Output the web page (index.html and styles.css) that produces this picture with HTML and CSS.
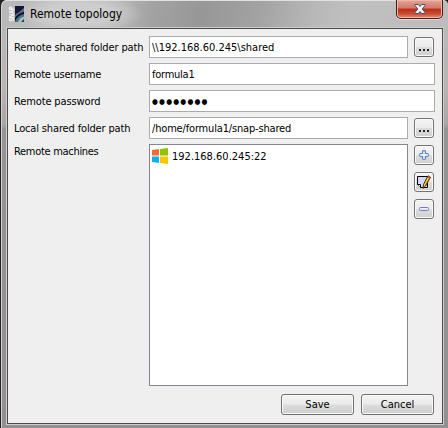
FILE: index.html
```html
<!DOCTYPE html>
<html lang="en">
<head>
<meta charset="utf-8">
<title>Remote topology</title>
<link rel="stylesheet" href="styles.css">
</head>
<body>
<div class="window">
  <header class="titlebar">
    <svg class="app-icon" width="16" height="16" viewBox="0 0 16 16">
      <text class="app-name" transform="translate(5.800 15.500) rotate(-90)" textLength="15" lengthAdjust="spacingAndGlyphs">SNAP</text>
      <rect x="7" width="9" height="16" fill="#121638"/>
      <path d="M7 9C9 7 13 5 16 2V6C12 7 9 9 7 12Z" fill="#686b88"/>
      <path d="M7 12C9 9 12 7 16 6V9C12 9 9 12 7 15Z" fill="#0c0f22"/>
      <path d="M7 16C8 12 11 9 16 8V11L11 16Z" fill="#447184"/>
      <path d="M10 16C11 13 13 11 16 10.500V16Z" fill="#9bc3bd"/>
      <path d="M13 16 16 13V16Z" fill="#31403c"/>
    </svg>
    <h1 class="title">Remote topology</h1>
    <button class="close" aria-label="Close">
      <svg width="12" height="10" viewBox="0 0 12 10"><path d="M1 .5H4.400L6 2.500 7.600 .5H11V1.500L8.200 5 11 8.500V9.500H7.600L6 7.500 4.400 9.500H1V8.500L3.800 5 1 1.500Z" fill="#f4f4f6" stroke="#4b4b60"/></svg>
    </button>
  </header>
  <main class="panel">
    <div class="row"><label class="l1">Remote shared folder path</label><div class="field">\\192.168.60.245\shared</div><button class="tool"><i class="dots"></i></button></div>
    <div class="row"><label class="l2">Remote username</label><div class="field v2">formula1</div></div>
    <div class="row"><label class="l3">Remote password</label><div class="field password">●●●●●●●●</div></div>
    <div class="row"><label class="l4">Local shared folder path</label><div class="field v4">/home/formula1/snap-shared</div><button class="tool"><i class="dots"></i></button></div>
    <div class="row machines">
      <label class="l5">Remote machines</label>
      <div class="list">
        <div class="machine">
          <svg width="16" height="16" viewBox="0 0 16 16"><path d="M0 2 7 1V7.500H0Z" fill="#fb6a32"/><path d="M8 .9 16 0V7.500H8Z" fill="#90c300"/><path d="M0 8.500H7V15L0 14Z" fill="#08b4f0"/><path d="M8 8.500H16V16L8 15Z" fill="#ffc400"/></svg>
          <span>192.168.60.245:22</span>
        </div>
      </div>
      <div class="tools">
        <button class="tool" aria-label="Add"><svg width="10" height="10" viewBox="0 0 10 10"><path d="M3.500 1.500Q3.500 .6 5 .6T6.500 1.500V3.500H8.500Q9.400 3.500 9.400 5T8.500 6.500H6.500V8.500Q6.500 9.400 5 9.400T3.500 8.500V6.500H1.500Q.6 6.500 .6 5T1.500 3.500H3.500Z" fill="#e4edf7" stroke="#5c86b7" stroke-width="1.100"/></svg></button>
        <button class="tool" aria-label="Edit"><svg width="14" height="14" viewBox="0 0 14 14"><path d="M.5 1.500H10.500V12.500H3.500L.5 9.500Z" fill="#d3d7fb" stroke="#000"/><path d="M.5 9.500H3.500V12.500" fill="#fff" stroke="#000"/><path d="M11 .8 13.500 2.300 8.500 11 6 13.300 6.500 9.500Z" fill="#f0d51b" stroke="#000" stroke-width=".8"/><path d="M12.500 3.500 8.200 10.800" stroke="#a64024" stroke-width=".9"/><path d="M11 1.600 13 2.800" stroke="#dc4745" stroke-width="1.600"/></svg></button>
        <button class="tool" aria-label="Remove"><svg width="10" height="4" viewBox="0 0 10 4"><rect x=".5" y=".5" width="9" height="3" rx="1" fill="#e8e9fa" stroke="#7778c3"/></svg></button>
      </div>
    </div>
    <footer class="actions"><button class="action">Save</button><button class="action">Cancel</button></footer>
  </main>
</div>
</body>
</html>
```
FILE: styles.css
```css
* { box-sizing: border-box; }
body { margin: 0; background: #222; overflow: hidden; font: 11px/20px "DejaVu Sans Condensed", "DejaVu Sans", sans-serif; font-stretch: condensed; color: #000; }
button { padding: 0; font: inherit; color: inherit; }
svg { display: block; flex: none; }
.window { width: 447px; height: 428px; margin-left: 1px; padding: 1px 4px 4px 5px; border-radius: 6px 6px 0 0; border-left: 1px solid #d5d3d3; background: linear-gradient(180deg, #b8b8b8 0, #b9b5b5 85px, #aaa6a6 124px, #959494 129px, #929090 100%); }
.titlebar { display: flex; height: 28px; margin: -1px -4px -1px -5px; padding: 0 4px 0 6px; border-radius: 5px 5px 0 0; border-top: 1px solid #e1e1e1; background: radial-gradient(ellipse 66px 22px at 75px 13px, #cdcdcd 50%, transparent), linear-gradient(100deg, #b9b9b9 0, #b5b5b5 26%, #a2a2a2 34%, #979797 45%, #a2a2a2 57%, #b8b8b8 70%, #c0c0c0 78%, #bcbcbc 100%); }
.app-icon { margin-top: 5px; margin-right: 6px; overflow: visible; }
.app-name { font: bold 7px "Liberation Sans", sans-serif; fill: #fff; }
.title { margin: 3px 0 0; font-size: 12px; font-weight: 400; line-height: 20px; white-space: nowrap; }
.close { display: flex; width: 47px; height: 19px; margin: -1px 1px 0 auto; align-items: center; justify-content: center; border: 1px solid #471c1a; border-top: 0; border-radius: 0 0 5px 5px; background: linear-gradient(#e3a597, #cf7868 45%, #b92e17 50%, #c74a32 75%, #e48a73); box-shadow: inset 0 0 0 1px #edb8aa, 0 1px #ddd; }
.panel { display: flex; flex-direction: column; width: 436px; height: 396px; margin-top: 1px; padding: 7px 7px 0 6px; border: 1px solid #4e4a4c; background: #efefef; box-shadow: 0 0 0 1px #cfcdcd; }
.row { display: flex; height: 27px; flex: none; }
label { width: 135px; flex: none; white-space: nowrap; line-height: 23px; }
.l1 { letter-spacing: -.12px; }
.l2 { letter-spacing: -.25px; }
.l3 { letter-spacing: -.13px; }
.l4 { letter-spacing: -.15px; }
.l5 { letter-spacing: -.3px; }
.field { flex: 1; height: 22px; padding-left: 2px; border: 1px solid #aaaab1; background: #fff; line-height: 21px; white-space: nowrap; }
.v2 { letter-spacing: -.25px; }
.v4 { letter-spacing: -.17px; }
.tool { display: flex; width: 20px; height: 20px; margin: 1px 1px 0 6px; align-items: center; justify-content: center; flex: none; border: 1px solid #737373; border-radius: 3px; background: linear-gradient(#f4f4f4, #ebebeb 48%, #dcdcdc 52%, #d0d0d0); box-shadow: inset 0 0 0 1px #fafafa; }
.dots { width: 10px; height: 2px; margin-top: 5px; background: repeating-linear-gradient(90deg, #222 0 2px, transparent 2px 4px); }
.password { font-size: 7.5px; letter-spacing: 1.2px; }
.machines { height: 242px; }
.machines label { height: 16px; line-height: 15px; }
.list { flex: 1; border: 1px solid #828790; background: #fff; }
.machine { display: flex; gap: 4px; padding: 3px 2px; line-height: 17px; }
.tools { display: flex; flex-direction: column; gap: 6px; }
.actions { display: flex; justify-content: flex-end; gap: 7px; margin: 8px 1px 0 0; }
.action { width: 73px; height: 21px; border: 1px solid #707070; border-radius: 3px; background: linear-gradient(#f3f3f3, #ebebeb 48%, #dcdcdc 52%, #cecece); box-shadow: inset 0 0 0 1px #fafafa; line-height: 19px; }
```
